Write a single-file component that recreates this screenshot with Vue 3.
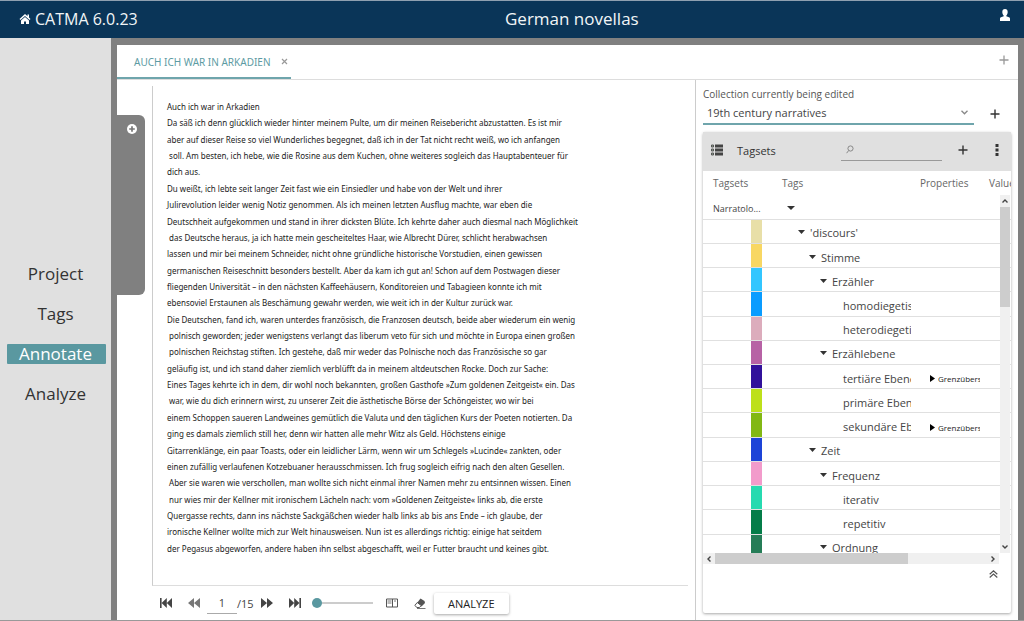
<script setup>
const nav = ['Project', 'Tags', 'Annotate', 'Analyze']

const lines = [
  'Auch ich war in Arkadien',
  'Da säß ich denn glücklich wieder hinter meinem Pulte, um dir meinen Reisebericht abzustatten. Es ist mir',
  'aber auf dieser Reise so viel Wunderliches begegnet, daß ich in der Tat nicht recht weiß, wo ich anfangen',
  ' soll. Am besten, ich hebe, wie die Rosine aus dem Kuchen, ohne weiteres sogleich das Hauptabenteuer für',
  'dich aus.',
  'Du weißt, ich lebte seit langer Zeit fast wie ein Einsiedler und habe von der Welt und ihrer',
  'Julirevolution leider wenig Notiz genommen. Als ich meinen letzten Ausflug machte, war eben die',
  'Deutschheit aufgekommen und stand in ihrer dicksten Blüte. Ich kehrte daher auch diesmal nach Möglichkeit',
  ' das Deutsche heraus, ja ich hatte mein gescheiteltes Haar, wie Albrecht Dürer, schlicht herabwachsen',
  'lassen und mir bei meinem Schneider, nicht ohne gründliche historische Vorstudien, einen gewissen',
  'germanischen Reiseschnitt besonders bestellt. Aber da kam ich gut an! Schon auf dem Postwagen dieser',
  'fliegenden Universität – in den nächsten Kaffeehäusern, Konditoreien und Tabagieen konnte ich mit',
  'ebensoviel Erstaunen als Beschämung gewahr werden, wie weit ich in der Kultur zurück war.',
  'Die Deutschen, fand ich, waren unterdes französisch, die Franzosen deutsch, beide aber wiederum ein wenig',
  ' polnisch geworden; jeder wenigstens verlangt das liberum veto für sich und möchte in Europa einen großen',
  ' polnischen Reichstag stiften. Ich gestehe, daß mir weder das Polnische noch das Französische so gar',
  'geläufig ist, und ich stand daher ziemlich verblüfft da in meinem altdeutschen Rocke. Doch zur Sache:',
  'Eines Tages kehrte ich in dem, dir wohl noch bekannten, großen Gasthofe »Zum goldenen Zeitgeist« ein. Das',
  ' war, wie du dich erinnern wirst, zu unserer Zeit die ästhetische Börse der Schöngeister, wo wir bei',
  'einem Schoppen saueren Landweines gemütlich die Valuta und den täglichen Kurs der Poeten notierten. Da',
  'ging es damals ziemlich still her, denn wir hatten alle mehr Witz als Geld. Höchstens einige',
  'Gitarrenklänge, ein paar Toasts, oder ein leidlicher Lärm, wenn wir um Schlegels »Lucinde« zankten, oder',
  'einen zufällig verlaufenen Kotzebuaner herausschmissen. Ich frug sogleich eifrig nach den alten Gesellen.',
  ' Aber sie waren wie verschollen, man wollte sich nicht einmal ihrer Namen mehr zu entsinnen wissen. Einen',
  ' nur wies mir der Kellner mit ironischem Lächeln nach: vom »Goldenen Zeitgeiste« links ab, die erste',
  'Quergasse rechts, dann ins nächste Sackgäßchen wieder halb links ab bis ans Ende – ich glaube, der',
  'ironische Kellner wollte mich zur Welt hinausweisen. Nun ist es allerdings richtig: einige hat seitdem',
  'der Pegasus abgeworfen, andere haben ihn selbst abgeschafft, weil er Futter braucht und keines gibt.'
]

const tags = [
  { name: "'discours'", level: 1, open: true, color: '#e8dfa8' },
  { name: 'Stimme', level: 2, open: true, color: '#f8d763' },
  { name: 'Erzähler', level: 3, open: true, color: '#33c6ff' },
  { name: 'homodiegetisch', level: 4, color: '#0a9cff' },
  { name: 'heterodiegetisch', level: 4, color: '#dcacbc' },
  { name: 'Erzählebene', level: 3, open: true, color: '#b762a5' },
  { name: 'tertiäre Ebene', level: 4, color: '#31119b', property: 'Grenzüberschreitung' },
  { name: 'primäre Ebene', level: 4, color: '#bde01a' },
  { name: 'sekundäre Ebene', level: 4, color: '#82b814', property: 'Grenzüberschreitung' },
  { name: 'Zeit', level: 2, open: true, color: '#1d44d8' },
  { name: 'Frequenz', level: 3, open: true, color: '#f29bcb' },
  { name: 'iterativ', level: 4, color: '#26dab0' },
  { name: 'repetitiv', level: 4, color: '#047d48' },
  { name: 'Ordnung', level: 3, open: true, color: '#257d57' }
]
</script>

<template>
  <div class="app">
    <header class="top">
      <a class="brand" href="#">
        <svg width="12" height="12" viewBox="0 0 12 12" fill="#fff">
          <path d="M6 1 0.5 6l1 1L6 3l4.500 4 1-1L10 4.600V1.500H8.500v1.800z" />
          <path d="M6 4 2 7.500V11h3V8.500h2V11h3V7.500z" />
        </svg>
        <span>CATMA 6.0.23</span>
      </a>
      <h1>German novellas</h1>
      <button class="plain user" aria-label="Account">
        <svg width="10" height="12" viewBox="0 0 10 12" fill="#fff">
          <path d="M5 0C3.200 0 2.300 1.200 2.300 3c0 1.600.6 2.800 1.400 3.500v.8L1 8.300C.3 8.600 0 9 0 9.800V12h10V9.800c0-.8-.3-1.200-1-1.500L6.300 7.300v-.8C7.100 5.800 7.700 4.600 7.700 3 7.700 1.200 6.800 0 5 0z" />
        </svg>
      </button>
    </header>

    <div class="body">
      <nav class="side">
        <a v-for="n in nav" :key="n" href="#" :class="{ active: n === 'Annotate' }">{{ n }}</a>
      </nav>

      <main class="work">
        <div class="tabs">
          <div class="tab">
            <a href="#">AUCH ICH WAR IN ARKADIEN</a>
            <button class="plain" aria-label="Close tab">
              <svg width="7" height="7" viewBox="0 0 7 7" stroke="#999" stroke-width="1.200"><path d="M1 1l5 5M6 1L1 6" /></svg>
            </button>
          </div>
          <button class="plain add-tab" aria-label="New tab">
            <svg width="10" height="10" viewBox="0 0 10 10" stroke="#999" stroke-width="1.300"><path d="M5 .5v9M.5 5h9" /></svg>
          </button>
        </div>

        <div class="split">
          <div class="rail">
            <aside class="drawer">
              <button class="plain" aria-label="Open drawer">
                <svg width="10" height="10" viewBox="0 0 10 10"><circle cx="5" cy="5" r="5" fill="#fff" /><path d="M5 2.200v5.600M2.200 5h5.600" stroke="#777" stroke-width="1.700" /></svg>
              </button>
            </aside>
          </div>

          <section class="doc">
            <article class="text">
              <p v-for="(l, i) in lines" :key="i">{{ l }}</p>
            </article>
            <div class="pager">
              <button class="plain first" aria-label="First page">
                <svg width="12" height="10" viewBox="0 0 12 10" fill="#444"><path d="M0 0h1.600v10H0zM6.800 0v10L1.600 5zM12 0v10L6.800 5z" /></svg>
              </button>
              <button class="plain prev" aria-label="Previous page">
                <svg width="12" height="10" viewBox="0 0 12 10" fill="#777"><path d="M6 0v10L0 5zM12 0v10L6 5z" /></svg>
              </button>
              <input class="page" type="text" value="1" aria-label="Page">
              <span class="count">/15</span>
              <button class="plain next" aria-label="Next page">
                <svg width="12" height="10" viewBox="0 0 12 10" fill="#444"><path d="M0 0v10l6-5zM6 0v10l6-5z" /></svg>
              </button>
              <button class="plain last" aria-label="Last page">
                <svg width="12" height="10" viewBox="0 0 12 10" fill="#444"><path d="M10.400 0H12v10h-1.600zM5.200 0v10l5.200-5zM0 0v10l5.200-5z" /></svg>
              </button>
              <input class="zoom" type="range" min="0" max="100" value="0" aria-label="Zoom">
              <button class="plain columns" aria-label="Columns">
                <svg width="12" height="10" viewBox="0 0 12 10" fill="none" stroke="#555"><path d="M.5 1h11v8H.5zM6.500 1v8" /><path d="M1.500 3h4M1.500 5h4M8 3h2" stroke="#777" /></svg>
              </button>
              <button class="plain erase" aria-label="Erase">
                <svg width="12" height="11" viewBox="0 0 12 11"><path d="M6.500.5 10.500 3 11 5 7.500 8.500 3 5z" fill="#555" /><path d="M3.200 4.500 7.200 7.500 5.500 9.500H3L.8 7.500z" fill="#fff" stroke="#555" /><path d="M3 10.500h8.500" stroke="#777" /></svg>
              </button>
              <button class="analyze">ANALYZE</button>
            </div>
          </section>

          <section class="panel">
            <label for="collection">Collection currently being edited</label>
            <div class="pick">
              <div class="select">
                <select id="collection"><option>19th century narratives</option></select>
                <svg width="7" height="5" viewBox="0 0 7 5" fill="none" stroke="#888" stroke-width="1.300"><path d="M.5.8l3 3 3-3" /></svg>
              </div>
              <button class="plain" aria-label="New collection">
                <svg width="10" height="10" viewBox="0 0 10 10" stroke="#333" stroke-width="1.400"><path d="M5 .5v9M.5 5h9" /></svg>
              </button>
            </div>

            <div class="card">
              <div class="bar">
                <svg width="12" height="12" viewBox="0 0 12 12" fill="#444"><path d="M4 .5h8v3H4zM4 4.500h8v3H4zM4 8.500h8v3H4z" /><path d="M.5 1h2v2h-2zM.5 5h2v2h-2zM.5 9h2v2h-2z" fill="#9ab09a" stroke="#555" /></svg>
                <h2>Tagsets</h2>
                <div class="search">
                  <svg width="8" height="9" viewBox="0 0 8 9" fill="none" stroke="#888"><circle cx="4.500" cy="3.500" r="2.600" /><path d="M2.700 5.500.6 8.200" /></svg>
                  <input type="text" aria-label="Search tagsets">
                </div>
                <button class="plain plus" aria-label="Add tagset">
                  <svg width="10" height="10" viewBox="0 0 10 10" stroke="#333" stroke-width="1.400"><path d="M5 .5v9M.5 5h9" /></svg>
                </button>
                <button class="plain more" aria-label="More options">
                  <svg width="4" height="12" viewBox="0 0 4 12" fill="#333"><path d="M.5 0h3v3h-3zM.5 4.500h3v3h-3zM.5 9h3v3h-3z" /></svg>
                </button>
              </div>

              <div class="tree">
                <table>
                  <colgroup><col class="c1"><col class="c2"><col class="c3"><col class="c4"><col class="c5"></colgroup>
                  <thead>
                    <tr><th>Tagsets</th><th></th><th class="th-tags">Tags</th><th class="th-prop">Properties</th><th class="th-val">Values</th></tr>
                  </thead>
                  <tbody>
                    <tr>
                      <td class="set">Narratolo...</td><td></td>
                      <td><div class="cell level-0"><svg width="8" height="4" viewBox="0 0 8 4" fill="#333"><path d="M0 0h8L4 4z" /></svg></div></td>
                      <td></td><td></td>
                    </tr>
                    <tr v-for="t in tags" :key="t.name">
                      <td></td>
                      <td :style="{ backgroundColor: t.color }"></td>
                      <td>
                        <div class="cell" :class="'level-' + t.level">
                          <svg v-if="t.open" width="7" height="4" viewBox="0 0 7 4" fill="#333"><path d="M0 0h7L3.500 4z" /></svg>
                          <span>{{ t.name }}</span>
                        </div>
                      </td>
                      <td>
                        <div v-if="t.property" class="prop">
                          <svg width="5" height="7" viewBox="0 0 5 7"><path d="M0 0v7l5-3.500z" /></svg><span>{{ t.property }}</span>
                        </div>
                      </td>
                      <td></td>
                    </tr>
                  </tbody>
                </table>
                <div class="vbar">
                  <svg width="6" height="4" viewBox="0 0 6 4" fill="none" stroke="#444" stroke-width="1.400"><path d="M.5 3.500 3 1l2.500 2.500" /></svg>
                  <div class="vthumb"></div>
                  <svg width="6" height="4" viewBox="0 0 6 4" fill="none" stroke="#444" stroke-width="1.400"><path d="M.5.5 3 3 5.500.5" /></svg>
                </div>
              </div>
              <div class="hbar">
                <svg width="4" height="6" viewBox="0 0 4 6" fill="none" stroke="#444" stroke-width="1.400"><path d="M3.500.5 1 3l2.500 2.500" /></svg>
                <div class="track"><div class="hthumb"></div></div>
                <svg width="4" height="6" viewBox="0 0 4 6" fill="none" stroke="#444" stroke-width="1.400"><path d="M.5.5 3 3 .5 5.500" /></svg>
              </div>
              <div class="foot">
                <button class="plain" aria-label="Expand">
                  <svg width="9" height="8" viewBox="0 0 9 8" fill="none" stroke="#555" stroke-width="1.200"><path d="M.7 4.200 4.500.8l3.800 3.400M.7 7.500l3.800-3.400 3.800 3.400" /></svg>
                </button>
              </div>
            </div>
          </section>
        </div>
      </main>
    </div>
  </div>
</template>

<style>
body { margin: 0; }
</style>

<style scoped>
* { box-sizing: border-box; }
.app {
  display: flex;
  flex-direction: column;
  height: 100vh;
  overflow: hidden;
  border-bottom: 1px solid #999;
  color: #444;
  font-family: "Open Sans", "Noto Sans", sans-serif;
}
svg { display: block; flex: none; }
a { color: inherit; text-decoration: none; }
h1, h2, p { margin: 0; font-weight: 400; }
input, select, button { font-family: inherit; color: inherit; }
.plain { display: block; padding: 0; border: 0; background: none; flex: none; }

.top {
  display: flex;
  justify-content: space-between;
  flex: none;
  height: 38px;
  padding: 0 14px 2px 19px;
  border-top: 1px solid #8fa0b0;
  background: #0a3558;
  color: #f2f5f7;
}
.brand { display: flex; align-items: center; gap: 4px; font-size: 16px; }
.top h1 { align-self: center; padding-left: 6px; font-size: 17px; }
.user { align-self: flex-start; margin-top: 8px; }

.body { display: flex; flex: 1; min-height: 0; }
.side {
  display: flex;
  flex-direction: column;
  justify-content: center;
  gap: 20px;
  flex: none;
  width: 111px;
  padding: 9px 5px 0 7px;
  background: #e0e0e0;
  font-size: 17px;
  line-height: 20px;
  text-align: center;
  color: #333;
}
.side a { padding-right: 2px; border-radius: 1px; }
.side .active { background: #5a98a0; color: #fff; }

.work {
  display: flex;
  flex-direction: column;
  flex: 1;
  min-width: 0;
  border: solid #808080;
  border-width: 7px 6px 0;
  background: #fff;
}
.tabs { display: flex; justify-content: space-between; flex: none; height: 35px; border-bottom: 1px solid #ddd; }
.tab {
  display: flex;
  align-items: center;
  gap: 10px;
  height: 34px;
  padding: 1px 3px 0 17px;
  border-bottom: 2px solid #6fa5ac;
  color: #5d9ba3;
  font-family: "Noto Sans", sans-serif;
  font-size: 10px;
}
.add-tab { align-self: center; margin: 0 9px 4px 0; }

.split { display: flex; flex: 1; min-height: 0; }
.rail { flex: none; width: 35px; padding-top: 35px; }
.drawer { width: 28px; height: 180px; padding: 9px 0 0 10px; border-radius: 0 6px 6px 0; background: #808080; }

.doc { display: flex; flex-direction: column; flex: 1; min-width: 0; margin-right: 7px; }
.text {
  display: flex;
  flex-direction: column;
  justify-content: space-between;
  flex: 1;
  margin-top: 6px;
  padding: 13px 14px 28px;
  border-left: 1px solid #ccc;
  border-bottom: 1px solid #ddd;
  color: #222;
  font-family: "Noto Sans", sans-serif;
  font-size: 8px;
  line-height: 16px;
  white-space: pre;
}
.pager { display: flex; align-items: center; flex: none; height: 34px; padding-left: 8px; }
.prev { margin-left: 16px; }
.page {
  width: 30px;
  height: 22px;
  margin-left: 7px;
  padding: 0;
  border: 0;
  border-bottom: 1px solid #aaa;
  outline: 0;
  background: none;
  font-size: 11px;
  text-align: center;
}
.count { width: 24px; font-size: 11px; }
.last { margin-left: 16px; }
.zoom { appearance: none; width: 61px; height: 10px; margin: 0 0 0 11px; background: linear-gradient(#ccc, #ccc) center / 100% 2px no-repeat; }
.zoom::-webkit-slider-thumb { appearance: none; width: 10px; height: 10px; border-radius: 50%; background: #5a98a0; }
.columns { margin-left: 13px; }
.erase { margin-left: 16px; }
.analyze {
  height: 21px;
  margin-left: 8px;
  padding: 0 14px;
  border: 0;
  border-radius: 2px;
  background: #fff;
  box-shadow: 0 1px 3px rgba(0, 0, 0, 0.35);
  color: #222;
  font-size: 11px;
}

.panel {
  display: flex;
  flex-direction: column;
  flex: none;
  width: 323px;
  padding: 6px 7px 7px;
  border-left: 1px solid #ccc;
}
.panel label { color: #555; font-size: 10px; line-height: 16px; }
.pick { display: flex; align-items: center; gap: 16px; height: 23px; }
.select { display: flex; align-items: center; width: 271px; height: 23px; padding-right: 6px; border-bottom: 2px solid #6fa5ac; }
.select select { flex: 1; appearance: none; height: 20px; padding: 0 4px; border: 0; background: none; font-size: 11px; }
.card {
  display: flex;
  flex-direction: column;
  flex: 1;
  min-height: 0;
  margin-top: 7px;
  border-radius: 2px;
  box-shadow: 0 1px 3px rgba(0, 0, 0, 0.35);
}
.bar { display: flex; align-items: center; flex: none; height: 39px; padding: 0 12px 3px 8px; background: #e0e0e0; color: #333; }
.bar h2 { width: 104px; margin-left: 14px; font-size: 11px; }
.search { display: flex; align-items: center; width: 101px; height: 22px; padding-left: 5px; border-bottom: 1px solid #999; }
.search input { width: 80px; border: 0; outline: 0; background: none; }
.plus { margin-left: 16px; }
.more { margin-left: auto; }

.tree { position: relative; flex: 1; min-height: 0; overflow: hidden; }
table { table-layout: fixed; width: 340px; height: 388px; border-collapse: collapse; }
tr { height: 24px; }
.c1 { width: 48px; }
.c2 { width: 11px; }
.c3 { width: 158px; }
.c4 { width: 69px; }
th { padding: 0; color: #666; font-size: 10px; font-weight: 400; text-align: left; }
th:first-child { padding-left: 10px; }
.th-tags { padding-left: 20px; }
td { padding: 4px 0 0; border-bottom: 1px solid #e0e0e0; overflow: hidden; white-space: nowrap; }
td.set { padding-left: 10px; overflow: visible; font-size: 9px; }
.cell { display: flex; align-items: center; gap: 5px; width: 149px; overflow: hidden; font-size: 11px; line-height: 18px; }
.cell svg { margin-bottom: 2px; }
.level-0 { padding-left: 25px; }
.level-1 { padding-left: 36px; }
.level-2 { padding-left: 47px; }
.level-3 { padding-left: 58px; }
.level-4 { padding-left: 81px; }
.cell span { flex: none; }
.prop { display: flex; align-items: center; gap: 3px; width: 60px; padding-left: 10px; overflow: hidden; color: #222; font-size: 8px; }
.vbar { position: absolute; top: 24px; right: 1px; bottom: 0; display: flex; flex-direction: column; align-items: center; width: 10px; padding: 4px 0; background: #f0f0f0; }
.vthumb { width: 10px; height: 100px; margin: 4px 0 auto; background: #cdcdcd; }
.hbar { display: flex; align-items: center; flex: none; height: 11px; margin-right: 12px; padding: 0 4px; background: #f0f0f0; }
.track { flex: 1; margin: 0 4px; }
.hthumb { width: 71%; height: 11px; background: #cdcdcd; }
.foot { display: flex; justify-content: flex-end; flex: none; height: 49px; padding: 6px 13px 0 0; }
.foot button { align-self: flex-start; }
</style>
